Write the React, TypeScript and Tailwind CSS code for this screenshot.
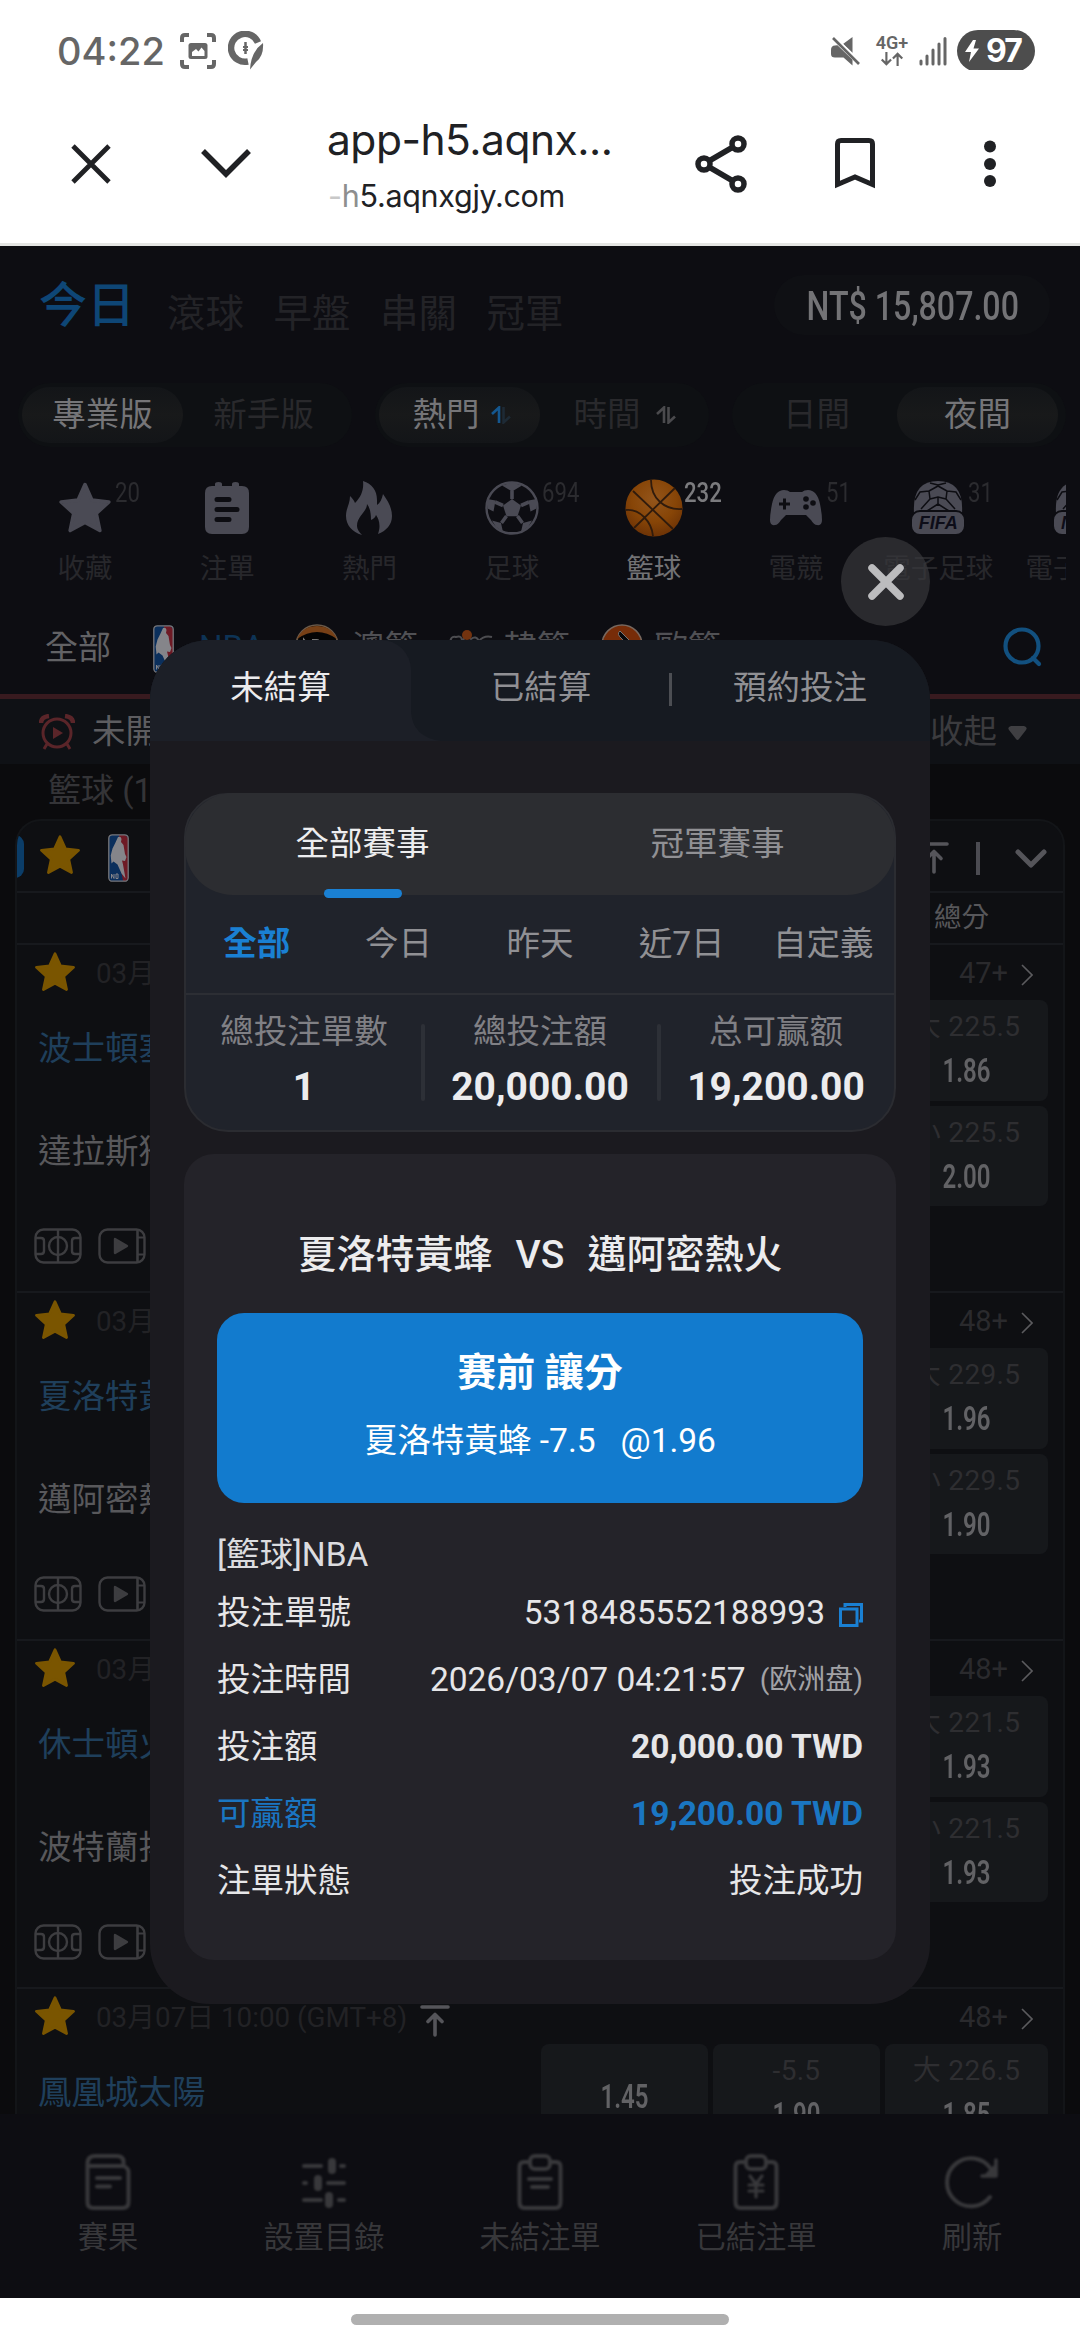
import React from "react";

const FONT = "font-[Roboto,'Noto_Sans_CJK_TC',sans-serif]";

/* ---------- shared drawings ---------- */

function Star({ className }: { className: string }) {
  return (
    <svg viewBox="0 0 24 24" className={className} fill="currentColor" stroke="currentColor" strokeWidth="1.6" strokeLinejoin="round">
      <path d="M12 1.6l3.1 6.9 7.5.8-5.6 5.1 1.6 7.6L12 18.4 5.4 22 7 14.4 1.4 9.3l7.5-.8z" />
    </svg>
  );
}

function NbaLogo({ className }: { className: string }) {
  return (
    <svg viewBox="0 0 21 48" preserveAspectRatio="none" className={className}>
      <rect x="0.8" y="0.8" width="19.4" height="46.4" rx="3.5" fill="#0b2f5c" />
      <path d="M11 1h6q3.200 3 3.200 3.400V43.700q0 3-3.200 3.400h-2L12 30z" fill="#6e1a25" />
      <path d="M10 3q3-1 3.500 2l-.5 3 2.500 3 1.500 9 1.500 3-1.500 4-3-.5 1 4 2.500 14-4-5-4-9-4-3-2 2-.8-8 1.800-7 3-6z" fill="#85858a" />
      <path d="M3.500 40v4.500M3.500 40l2.500 4.500V40M8 40v4.500h2V40z" stroke="#85858a" strokeWidth="1" fill="none" />
      <rect x="0.8" y="0.8" width="19.400" height="46.400" rx="3.500" fill="none" stroke="#77777b" strokeWidth="1.300" />
    </svg>
  );
}

function ToTop({ className }: { className: string }) {
  return (
    <svg viewBox="0 0 30 32" className={className} fill="none" stroke="currentColor" strokeWidth="3.6" strokeLinecap="round" strokeLinejoin="round">
      <path d="M2 2h26M15 30V10M8 16.500l7-7 7 7" />
    </svg>
  );
}

function SortArrows({ up, down }: { up: string; down: string }) {
  return (
    <svg viewBox="0 0 20 18" className="h-[18px] w-5" fill="none" strokeWidth="2.600">
      <path d="M1 8l7-6.500V17" className={up} />
      <path d="M12.500 1v15.500l6.500-6" className={down} />
    </svg>
  );
}

/* ---------- browser chrome ---------- */

function StatusBar() {
  return (
    <div className="flex h-[70px] items-start bg-white pl-[57px] pr-[45px] pt-[31px] text-[#666]">
      <span className="w-[123px] font-[Inter,sans-serif] text-[38px] font-[450] leading-[40px]">04:22</span>
      <svg viewBox="0 0 36 36" className="mt-[2px] h-9 w-9" fill="none" stroke="currentColor" strokeWidth="4">
        <path d="M2 9V5q0-3 3-3h4M27 2h4q3 0 3 3v4M34 27v4q0 3-3 3h-4M9 34H5q-3 0-3-3v-4" />
        <rect x="8.500" y="10" width="19" height="16" rx="2.500" fill="currentColor" stroke="none" />
        <path d="M12 23v-4l4-3 2.500 2.500 3-4L24.500 18v5z" fill="white" stroke="none" />
      </svg>
      <svg viewBox="0 0 36 40" className="ml-[12px] h-10 w-9" fill="none" stroke="currentColor">
        <path d="M20 30.500A14 14 0 1 1 30 11.500" strokeWidth="6.500" />
        <path d="M35 12q1 13-7 19l-6 7.500q1-18 13-26.500z" fill="currentColor" stroke="none" />
        <path d="M17.500 11v12" strokeWidth="2.500" />
        <path d="M15 16h5M15 19h5" strokeWidth="1.800" />
      </svg>
      <div className="flex-1" />
      <svg viewBox="0 0 30 30" className="mt-[5px] h-[30px] w-[30px]" fill="currentColor">
        <path d="M21.500 1v16L12 8zM8 9L21.500 22.500v7l-9-8H4q-4 0-4-3.500v-4Q0 9.500 4 9.500z" />
        <path d="M2 1.500l27 26" stroke="white" strokeWidth="5" />
        <path d="M2 2l26 26" stroke="currentColor" strokeWidth="2.600" />
      </svg>
      <div className="ml-[13px] flex w-[36px] flex-col items-center pt-[4px]">
        <span className="font-[Roboto,sans-serif] text-[18px] font-semibold leading-[16px]">4G+</span>
        <svg viewBox="0 0 24 15" className="mt-[1px] h-[14px] w-6" fill="none" stroke="currentColor" strokeWidth="2.300">
          <path d="M6 0v13M1 8l5 5 5-5M18 15V2M13 7l5-5 5 5" />
        </svg>
      </div>
      <svg viewBox="0 0 28 30" className="ml-[9px] mt-[5px] h-[30px] w-7" stroke="currentColor" strokeWidth="3" strokeLinecap="round">
        <path d="M2 28v-3M8 28v-8M14 28V14M20 28V8M26 28V2.500" />
      </svg>
      <div className="ml-[10px] mt-[-1px] flex h-[42px] w-[78px] items-center rounded-full bg-[#4d4d4d] pl-[7px] text-white">
        <svg viewBox="0 0 16 22" className="h-[22px] w-4" fill="white">
          <path d="M9 0L1 12h6l-2 10L15 8.500H9.500L12 0z" />
        </svg>
        <span className="ml-[6px] font-[Inter,sans-serif] text-[32px] font-bold leading-[42px] tracking-[-2px]">97</span>
      </div>
    </div>
  );
}

function BrowserBar() {
  return (
    <div className="flex h-[176px] border-b-[3px] border-[#e4e5e3] bg-white text-[#202124]">
      <svg viewBox="0 0 40 40" className="ml-[71px] mt-[74px] h-10 w-10" stroke="currentColor" strokeWidth="4.800">
        <path d="M2 2l36 36M38 2L2 38" />
      </svg>
      <svg viewBox="0 0 50 30" className="ml-[90px] mt-[79px] h-[30px] w-[50px]" fill="none" stroke="currentColor" strokeWidth="5.500">
        <path d="M2 2l23 23L48 2" />
      </svg>
      <div className="ml-[76px] mt-[41px] w-[300px] font-[Inter,sans-serif]">
        <div className="text-[42.500px] leading-[58px] tracking-[-0.500px]">app-h5.aqnx...</div>
        <div className="ml-[1px] mt-[7px] text-[30.500px] leading-[40px] tracking-[-0.300px]">
          <span className="text-[#c8c8c8]">-</span>
          <span className="text-[#8e8e8e]">h</span>5.aqnxgjy.com
        </div>
      </div>
      <svg viewBox="0 0 52 58" className="ml-[68px] mt-[65px] h-[58px] w-[52px]" fill="none" stroke="currentColor" strokeWidth="5.500">
        <circle cx="9" cy="29" r="6" />
        <circle cx="43" cy="9" r="6" />
        <circle cx="43" cy="49" r="6" />
        <path d="M14 26l24-14M14 32l24 14" />
      </svg>
      <svg viewBox="0 0 40 52" className="ml-[88px] mt-[68px] h-[52px] w-10" fill="none" stroke="currentColor" strokeWidth="5">
        <path d="M2.500 46.500V6q0-3.500 3.500-3.500h28q3.500 0 3.500 3.500v40.500L20 39z" />
      </svg>
      <svg viewBox="0 0 12 48" className="ml-[109px] mt-[70px] h-12 w-3" fill="currentColor">
        <circle cx="6" cy="6.500" r="6" />
        <circle cx="6" cy="24" r="6" />
        <circle cx="6" cy="41" r="6" />
      </svg>
    </div>
  );
}

/* ---------- page behind the dialog ---------- */

function TopTabs() {
  return (
    <div className="flex h-[137px] shrink-0 items-start pl-[39px] pr-[30px]">
      <div className="mt-[30px] w-24 text-[48px] font-medium leading-[60px] text-[#0e4676]">今日</div>
      <div className="ml-[32px] mt-[38px] flex gap-[29.500px] whitespace-nowrap text-[38.500px] leading-[60px] text-[#232327]">
        <span>滾球</span>
        <span>早盤</span>
        <span>串關</span>
        <span>冠軍</span>
      </div>
      <div className="flex-1" />
      <div className="mt-[29px] flex h-[60px] w-[276px] shrink-0 justify-center rounded-full bg-[#0f1014]">
        <span className="w-[272px] shrink-0 scale-x-[0.775] whitespace-nowrap text-center text-[41.500px] font-medium leading-[62px] text-[#737376]">NT$ 15,807.00</span>
      </div>
    </div>
  );
}

const activePill = "bg-linear-to-b from-[#131518] via-[#18191a] to-[#131518] text-[#757578]";

function Segments() {
  const base = "flex h-[56px] w-[161px] items-center justify-center rounded-full";
  return (
    <div className="flex h-[64px] shrink-0 gap-[23px] pl-[18px] text-[33.500px] leading-[56px]">
      <div className="flex w-[334px] rounded-full bg-[#0e1013] p-1 text-[#29292c]">
        <div className={`${base} ${activePill}`}>專業版</div>
        <div className={base}>新手版</div>
      </div>
      <div className="flex w-[334px] rounded-full bg-[#0e1013] p-1 text-[#29292c]">
        <div className={`${base} ${activePill}`}>
          <span className="ml-[4px] mr-[11px]">熱門</span>
          <SortArrows up="stroke-[#14578f]" down="stroke-[#1d2a35]" />
        </div>
        <div className={base}>
          <span className="ml-[8px] mr-[15px]">時間</span>
          <SortArrows up="stroke-[#4a4a4d]" down="stroke-[#4a4a4d]" />
        </div>
      </div>
      <div className="flex w-[334px] rounded-full bg-[#0e1013] p-1 text-[#29292c]">
        <div className={base}>日間</div>
        <div className={`${base} ${activePill}`}>夜間</div>
      </div>
    </div>
  );
}

const slips = (
  <svg viewBox="0 0 44 52" className="h-[52px] w-11">
    <path d="M10 2q0-2 3.500-2t3.500 2v2h10V2q0-2 3.500-2T34 2v2h3q7 0 7 7v34q0 7-7 7H7q-7 0-7-7V11q0-7 7-7h3z" fill="#4a4a54" />
    <path d="M12 17.500h12M12 27.500h20M12 37.500h12" stroke="#0d0d12" strokeWidth="5" strokeLinecap="round" />
  </svg>
);

const flame = (
  <svg viewBox="0 0 46 54" className="h-[54px] w-[46px]" fill="#4a4a54">
    <path d="M17 0c9 3 14 9 14 19v5c3-2 5-6 6-11 5 7 9 14 9 22 0 9-6 15-14 18 3-8 1-15-2-19-1 3-3 4-5 5 0-7-1-12-4-16 0 8-10 12-10 22 0 3 2 6 5 9C6 51 0 44 0 35c0-8 4-12 4-20 2 2 4 4 5 7 6-6 9-13 8-22z" />
  </svg>
);

const soccer = (
  <svg viewBox="0 0 54 54" className="h-[54px] w-[54px]">
    <circle cx="27" cy="27" r="25.500" fill="#0d0d12" stroke="#4a4a54" strokeWidth="2.400" />
    <path d="M27 18l9 6.600-3.500 10.700h-11L18 24.600z" fill="#4a4a54" />
    <path d="M27 18V9.500M36 24.500l8-3.500M32.500 35l5 7M21.500 35l-5 7M18 24.500L10 21" stroke="#4a4a54" strokeWidth="3.600" />
    <path d="M17 4.500l10 6 10-6-10-3zM51.500 18l-8 1.500 2 11 6-3zM2.500 27.500l6 3 2-11-8-1.500zM36 51l2-9 9-2.500-3.500 6zM18 51l-2-9-9-2.500 3.500 6zM20 51h14l-7 2z" fill="#4a4a54" />
  </svg>
);

const basketball = (
  <svg viewBox="0 0 58 58" className="h-[58px] w-[58px]">
    <defs>
      <radialGradient id="ball" cx="0.500" cy="0.350" r="0.650">
        <stop offset="0" stopColor="#93551b" />
        <stop offset="0.600" stopColor="#874507" />
        <stop offset="1" stopColor="#6d3306" />
      </radialGradient>
    </defs>
    <circle cx="29" cy="29" r="28.500" fill="url(#ball)" />
    <path d="M8 12l40 38M50 9L9 49M26 1q0 14 9 22t22 7M1 31q10-1 18 7t9 19" fill="none" stroke="#301b0c" strokeWidth="1.800" />
  </svg>
);

const gamepad = (
  <svg viewBox="0 0 52 36" className="h-9 w-[52px]">
    <path d="M14 0q4 0 6 2h12q2-2 6-2 9 0 12 14 2 10 2 16 0 6-5 5-3 0-6-5l-5-5H16l-5 5q-3 5-6 5-5 1-5-5 0-6 2-16Q5 0 14 0z" fill="#4a4a54" />
    <path d="M9 14h11M14.500 8.500v11" stroke="#0d0d12" strokeWidth="3" />
    <g fill="#0d0d12">
      <circle cx="36" cy="9" r="2.800" />
      <circle cx="36" cy="17" r="2.800" />
      <circle cx="43" cy="13" r="2.800" />
    </g>
  </svg>
);

function BadgeBall({ text }: { text: string }) {
  return (
    <div className="flex w-14 flex-col items-center">
      <svg viewBox="0 0 50 32" className="h-8 w-[50px]">
        <path d="M1 32Q-1 0 25 0t24 32z" fill="#4a4a54" />
        <path d="M25 4l-8-2M25 4l8-2M25 4v2M25 5l-9 5M25 5l9 5M16 10l-9 1-5 8M34 10l9 1 5 8M16 10l1 8-9 10M34 10l-1 8 9 10M17 18l8-2 8 2M25 16v8M14 30l11-7 11 7" fill="none" stroke="#0d0d12" strokeWidth="1.500" />
      </svg>
      <div className="mt-[-3px] flex h-[26px] w-[56px] items-center justify-center rounded-[10px] border-2 border-[#0d0d12] bg-[#4a4a54] font-['Liberation_Sans',sans-serif] text-[18px] font-bold italic leading-[22px] text-[#0d0d18]">
        {text}
      </div>
    </div>
  );
}

const sports = [
  { label: "收藏", count: "20", icon: <Star className="h-[54px] w-[54px] text-[#4a4a54]" /> },
  { label: "注單", count: "", icon: slips },
  { label: "熱門", count: "", icon: flame },
  { label: "足球", count: "694", icon: soccer },
  { label: "籃球", count: "232", icon: basketball, active: true },
  { label: "電競", count: "51", icon: gamepad },
  { label: "電子足球", count: "31", icon: <BadgeBall text="FIFA" /> },
  { label: "電子籃球", count: "", icon: <BadgeBall text="NBA" /> },
];

function Sports() {
  return (
    <div className="ml-[14px] mr-[14px] flex h-[161px] shrink-0 overflow-hidden">
      {sports.map((s) => (
        <div key={s.label} className="relative flex w-[142.200px] shrink-0 flex-col items-center pt-[32px]">
          <div className="flex h-[58px] items-center">{s.icon}</div>
          <span className={`mt-[12px] whitespace-nowrap text-[27.500px] leading-[40px] ${s.active ? "text-[#727275]" : "text-[#27272b]"}`}>{s.label}</span>
          {s.count && (
            <span className={`absolute left-[101px] top-[32px] origin-left scale-x-[0.820] text-[27px] leading-[28px] ${s.active ? "font-medium text-[#7b7b7e]" : "text-[#2b2b2f]"}`}>{s.count}</span>
          )}
        </div>
      ))}
    </div>
  );
}

function Leagues() {
  return (
    <div className="flex h-[86px] shrink-0 items-start pl-[45px] pr-[37px] pt-[16px] text-[33px] leading-[48px] text-[#505054]">
      <span className="text-[#626265]">全部</span>
      <NbaLogo className="ml-[42px] mt-[1px] h-12 w-[21px]" />
      <span className="ml-[25px] text-[#0d3355]">NBA</span>
      <svg viewBox="0 0 44 44" className="ml-[30px] h-11 w-11">
        <circle cx="22" cy="22" r="21" fill="#050505" stroke="#6b5a4a" strokeWidth="1.500" />
        <path d="M2 15Q8 2 22 2t20 13Q22 1 2 15z" fill="#774016" />
        <path d="M9 22v-6l5 6v-6M18 16v6h4q3-3 0-3 3-3 0-3zM28 16v6h6" fill="none" stroke="#777" strokeWidth="2" />
      </svg>
      <span className="ml-[13px]">澳籃</span>
      <svg viewBox="0 0 46 44" className="ml-[30px] mt-[3px] h-11 w-[46px]">
        <path d="M2 18q0-10 6-8 6-2 6 4 4-6 9-2 5-4 8 2 5-6 13-4" fill="none" stroke="#4c4c50" strokeWidth="2" />
        <circle cx="19" cy="8" r="5" fill="#73330f" />
      </svg>
      <span className="ml-[10px]">韓籃</span>
      <svg viewBox="0 0 46 46" className="ml-[28px] mt-[-1px] h-[46px] w-[46px]">
        <circle cx="24" cy="22" r="20" fill="#772c08" stroke="#77685f" strokeWidth="1.500" />
        <path d="M22 8q-4 3 2 8l8 10q6-2 2-6z" fill="#08080a" stroke="#777" />
      </svg>
      <span className="ml-[11px]">歐籃</span>
      <div className="flex-1" />
      <svg viewBox="0 0 40 40" className="mt-[3px] h-10 w-10" fill="none" stroke="#12507f" strokeWidth="4.200" strokeLinecap="round">
        <circle cx="19" cy="19" r="16.500" />
        <path d="M30 31l6 6" />
      </svg>
    </div>
  );
}

function Unstarted() {
  return (
    <>
      <div className="flex h-[70px] shrink-0 items-center border-t-[5px] border-[#381a1f] bg-[#0f1115] pl-[39px] pr-[53px] text-[33.500px] leading-[65px]">
        <svg viewBox="0 0 36 36" className="h-9 w-9" fill="none" stroke="#5a2529" strokeWidth="3">
          <circle cx="18" cy="19" r="14" />
          <path d="M2 9q0-6 8-7M34 9q0-6-8-7" strokeWidth="4.500" />
          <path d="M8 30l-3 5M28 30l3 5" />
          <path d="M14 13l10 6-10 6z" fill="#5a2529" stroke="none" />
        </svg>
        <span className="ml-[17px] text-[#5d5d60]">未開賽</span>
        <div className="flex-1" />
        <span className="text-[#3b3b3e]">收起</span>
        <svg viewBox="0 0 19 15" className="ml-[11px] mt-[3px] h-[15px] w-[19px]" fill="#3f3f42">
          <path d="M3 0h13q4 1 2 4l-7 9q-1.500 2-3 0L1 4Q-1 1 3 0z" />
        </svg>
      </div>
      <div className="h-[55px] shrink-0 pl-[48px] text-[33px] leading-[53px] text-[#343437]">籃球 (13)</div>
    </>
  );
}

type Cell = { line?: string; odds?: string };
type MatchData = { time: string; more: string; home: string; away: string; cells: Cell[]; pin?: boolean };

const blank: Cell = {};
const matches: MatchData[] = [
  { time: "03月07日", more: "47+", home: "波士頓塞爾提克", away: "達拉斯獨行俠", cells: [blank, blank, { line: "大 225.5", odds: "1.86" }, blank, blank, { line: "小 225.5", odds: "2.00" }] },
  { time: "03月07日", more: "48+", home: "夏洛特黃蜂", away: "邁阿密熱火", cells: [blank, blank, { line: "大 229.5", odds: "1.96" }, blank, blank, { line: "小 229.5", odds: "1.90" }] },
  { time: "03月07日", more: "48+", home: "休士頓火箭", away: "波特蘭拓荒者", cells: [blank, blank, { line: "大 221.5", odds: "1.93" }, blank, blank, { line: "小 221.5", odds: "1.93" }] },
  { time: "03月07日 10:00 (GMT+8)", more: "48+", home: "鳳凰城太陽", away: "", cells: [{ odds: "1.45" }, { line: "-5.5", odds: "1.90" }, { line: "大 226.5", odds: "1.85" }], pin: true },
];

function Match({ m }: { m: MatchData }) {
  return (
    <div className="h-[348px] shrink-0 border-t-2 border-[#17191d]">
      <div className="flex h-[55px] items-center pl-[17px] pr-[30px]">
        <Star className="mb-[2px] h-[42px] w-[42px] text-[#7a5500]" />
        <span className="ml-[20px] mt-[2px] text-[27.800px] leading-[40px] text-[#222225]">{m.time}</span>
        {m.pin && <ToTop className="ml-[13px] mt-[8px] h-8 w-[30px] text-[#55555a]" />}
        <div className="flex-1" />
        <span className="text-[29px] leading-[40px] text-[#2a2a2d]">{m.more}</span>
        <svg viewBox="0 0 12 22" className="ml-[13px] mt-[5px] h-[22px] w-3" fill="none" stroke="#5b5b5e" strokeWidth="1.600">
          <path d="M1 1l10 10L1 21" />
        </svg>
      </div>
      <div className="flex pl-[21px] pr-[15px]">
        <div className="flex-1 text-[33.500px] leading-[48px]">
          <div className="mt-[25px] text-[#1f3f5b]">{m.home}</div>
          <div className="mt-[55px] h-12 text-[#58585b]">{m.away}</div>
          <div className="-ml-[4px] mt-[52px] flex gap-[16px]">
            <svg viewBox="0 0 48 36" className="h-9 w-12" fill="none" stroke="#3d3d40" strokeWidth="2.400">
              <rect x="1.500" y="1.500" width="45" height="33" rx="8" />
              <path d="M24 2v32M2 10h5q3 0 3 3v10q0 3-3 3H2M46 10h-5q-3 0-3 3v10q0 3 3 3h5" />
              <circle cx="24" cy="18" r="9" />
            </svg>
            <svg viewBox="0 0 48 36" className="h-9 w-12" fill="none" stroke="#3d3d40" strokeWidth="2.400">
              <rect x="1.500" y="1.500" width="45" height="33" rx="8" />
              <path d="M39.500 2v32" strokeWidth="2.600" />
              <path d="M39 9.500h7M39 26.500h7" strokeWidth="2" />
              <path d="M17 11l12 7-12 7z" fill="#3d3d40" strokeLinejoin="round" />
            </svg>
          </div>
        </div>
        <div className="grid grid-cols-[167px_167px_163px] content-start gap-x-[5px] gap-y-[5px]">
          {m.cells.map((c, i) => (
            <div key={i} className="flex h-[100.500px] flex-col items-center justify-center rounded-[8px] bg-[#16181b]">
              {c.line && <span className="h-[46px] text-[28px] leading-[46px] tracking-[0.300px] text-[#2e2e31]">{c.line}</span>}
              {c.odds && <span className={`scale-x-[0.740] text-[32.500px] font-semibold text-[#626265] ${c.line ? "h-[46px] leading-[43px]" : "pt-[6px]"}`}>{c.odds}</span>}
            </div>
          ))}
        </div>
      </div>
    </div>
  );
}

function League() {
  return (
    <div className="mx-[15px] flex h-[1295px] shrink-0 flex-col overflow-hidden rounded-t-[26px] border-x-2 border-t-2 border-[#131518] bg-[#0e0f12]">
      <div className="-mx-[2px] flex h-[72px] shrink-0 items-center border-b-2 border-[#17191d] pr-[18px]">
        <div className="h-[43px] w-[9px] rounded-r-[9px] bg-[#0b3d68]" />
        <Star className="mb-[3px] ml-[15px] h-[42px] w-[42px] text-[#7a5500]" />
        <NbaLogo className="ml-[27px] mt-[4px] h-12 w-[21px]" />
        <div className="flex-1" />
        <ToTop className="mt-[4px] h-8 w-[30px] text-[#55555a]" />
        <div className="ml-[27px] mt-[5px] h-[33px] w-[4px] bg-[#4c4c52]" />
        <svg viewBox="0 0 32 20" className="ml-[35px] mt-[6px] h-5 w-8" fill="none" stroke="#55555a" strokeWidth="5" strokeLinecap="round" strokeLinejoin="round">
          <path d="M3 3l13 13L29 3" />
        </svg>
      </div>
      <div className="h-[50px] shrink-0 pr-[74px] text-right text-[27.500px] leading-[49px] text-[#57575a]">總分</div>
      {matches.map((m) => (
        <Match key={m.home} m={m} />
      ))}
    </div>
  );
}

function BottomNav() {
  const p = { fill: "none", stroke: "#38383b", strokeWidth: 4, strokeLinecap: "round" as const, strokeLinejoin: "round" as const };
  const items = [
    {
      label: "賽果",
      icon: (
        <svg viewBox="0 0 46 58" className="h-[58px] w-[46px]" {...p}>
          <path d="M2.500 11q0-8 7-8h22q7 0 7 6v4h-36zM2.500 12v37q0 6 6 6h29q6 0 6-6V19q0-4-5-6M12 25h23M12 33.500h13" />
        </svg>
      ),
    },
    {
      label: "設置目錄",
      icon: (
        <svg viewBox="0 0 46 52" className="h-[52px] w-[46px]" {...p}>
          <path d="M3 10h17M40 10h3M3 27h2M27 27h16M3 44h17M38 44h5" />
          <path d="M31 6v8M17 23v8M28 40v8" strokeWidth="8" />
        </svg>
      ),
    },
    {
      label: "未結注單",
      icon: (
        <svg viewBox="0 0 46 58" className="h-[58px] w-[46px]" {...p}>
          <path d="M13 9H7q-4.500 0-4.500 5v35q0 6 5 6h31q5 0 5-6V14q0-5-4.500-5h-6M12 26h22M15 34h16" />
          <rect x="13" y="3" width="20" height="13" rx="5" />
        </svg>
      ),
    },
    {
      label: "已結注單",
      icon: (
        <svg viewBox="0 0 46 58" className="h-[58px] w-[46px]" {...p}>
          <path d="M13 9H7q-4.500 0-4.500 5v35q0 6 5 6h31q5 0 5-6V14q0-5-4.500-5h-6" />
          <rect x="13" y="3" width="20" height="13" rx="5" />
          <path d="M17 23l6 8 6-8M23 31v13M16 32h14M16 38h14" strokeWidth="3.200" />
        </svg>
      ),
    },
    {
      label: "刷新",
      icon: (
        <svg viewBox="0 0 54 54" className="h-[54px] w-[54px]" {...p}>
          <path d="M45 42A24 24 0 1 1 46 14l3 6" />
          <path d="M51 5v16H37" strokeWidth="3.600" />
          <path d="M50 12v8h-8z" fill="#38383b" />
        </svg>
      ),
    },
  ];
  return (
    <div className="flex h-[184px] shrink-0 bg-[#0d0d12]">
      {items.map((it) => (
        <div key={it.label} className="flex w-[216px] flex-col items-center pt-[39px]">
          <div className="flex h-[58px] items-center blur-[0.800px]">{it.icon}</div>
          <span className="mt-[7px] text-[30.300px] leading-[40px] text-[#37373a]">{it.label}</span>
        </div>
      ))}
    </div>
  );
}

/* ---------- bet record dialog ---------- */

function Summary() {
  const stats = [
    ["總投注單數", "1"],
    ["總投注額", "20,000.00"],
    ["总可赢额", "19,200.00"],
  ];
  return (
    <div className="h-[339px] rounded-[44px] border-2 border-[#2b2c31] bg-[#20232b]">
      <div className="-mx-[1px] -mt-[2px] flex h-[102px] rounded-[48px] bg-[#2c2d31] text-[33.500px] leading-[102px]">
        <div className="relative flex flex-1 justify-center text-[#ededef]">
          全部賽事
          <div className="absolute bottom-[-3px] left-[139px] h-[9px] w-[78px] rounded-full bg-[#1a80d3]" />
        </div>
        <div className="flex-1 text-center text-[#909094]">冠軍賽事</div>
      </div>
      <div className="flex h-[100px] border-b-2 border-[#2c2e34] text-center text-[33.500px] leading-[98px] text-[#909094]">
        <span className="flex-1 font-bold text-[#1a80d3]">全部</span>
        <span className="flex-1">今日</span>
        <span className="flex-1">昨天</span>
        <span className="flex-1">近7日</span>
        <span className="flex-1">自定義</span>
      </div>
      <div className="grid grid-cols-3 divide-x-0 pt-[13px]">
        {stats.map(([label, value], i) => (
          <div key={label} className="relative text-center">
            <div className="text-[33.500px] leading-[48px] text-[#808085]">{label}</div>
            <div className="text-[39px] font-bold leading-[62px] text-[#ececee]">{value}</div>
            {i < 2 && <div className="absolute right-[-3px] top-[16px] h-[77px] w-[4px] rounded-full bg-[#2d3037]" />}
          </div>
        ))}
      </div>
    </div>
  );
}

function Row({ label, tone = "text-[#e6e6e8]", children }: { label: string; tone?: string; children: React.ReactNode }) {
  return (
    <div className={`flex h-[66.800px] items-center justify-between leading-[66px] ${tone}`}>
      <span>{label}</span>
      <span className="flex items-center">{children}</span>
    </div>
  );
}

function Ticket() {
  return (
    <div className="mt-[22px] h-[806px] rounded-[30px] bg-[#242329] px-[33px] pt-[71px] text-[33.500px]">
      <div className="flex justify-center gap-[23px] text-[39px] font-medium leading-[60px] text-[#ececee]">
        <span>夏洛特黃蜂</span>
        <span>VS</span>
        <span>邁阿密熱火</span>
      </div>
      <div className="mt-[28px] h-[190px] rounded-[27px] bg-[#127bce] pt-[29px] text-center text-white">
        <div className="text-[39px] font-bold leading-[62px]">赛前 讓分</div>
        <div className="mt-[6px] whitespace-pre leading-[62px]">夏洛特黃蜂 -7.5{"   "}@1.96</div>
      </div>
      <div className="mt-[27px] h-[50px] leading-[50px] text-[#dcdcdf]">[籃球]NBA</div>
      <Row label="投注單號">
        5318485552188993
        <svg viewBox="0 0 24 24" className="ml-[14px] mt-[4px] h-6 w-6" fill="none" stroke="#1a80d3" strokeWidth="3">
          <rect x="1.500" y="6" width="16.500" height="16.500" />
          <path d="M6 4V1.500h16.500V18H20" />
        </svg>
      </Row>
      <Row label="投注時間">
        2026/03/07 04:21:57<span className="ml-[14px] text-[28px] text-[#a2a2a6]">(欧洲盘)</span>
      </Row>
      <Row label="投注額">
        <b>20,000.00 TWD</b>
      </Row>
      <Row label="可贏額" tone="text-[#1a76c2]">
        <b>19,200.00 TWD</b>
      </Row>
      <Row label="注單狀態">投注成功</Row>
    </div>
  );
}

function Dialog() {
  return (
    <div className="absolute left-[150px] top-[640px] h-[1364px] w-[780px] overflow-hidden rounded-[60px] bg-[#1b1a1f]">
      <div className="flex h-[101px] bg-[#161a21] text-center text-[33.500px] leading-[96px] text-[#909094]">
        <div className="relative w-[261px] rounded-tr-[30px] bg-[#1c1f27] text-[#ececee]">
          未結算
          <svg viewBox="0 0 30 30" className="absolute bottom-0 left-[261px] h-[30px] w-[30px]" fill="#1c1f27">
            <path d="M0 0q1 26 30 30H0z" />
          </svg>
        </div>
        <div className="w-[260px]">已結算</div>
        <div className="-mx-[2px] mt-[33px] h-[33px] w-[3px] bg-[#4c4e53]" />
        <div className="w-[260px]">預約投注</div>
      </div>
      <div className="px-[34px] pt-[52px]">
        <Summary />
        <Ticket />
      </div>
    </div>
  );
}

export default function App() {
  return (
    <div className={`relative flex h-[2340px] w-[1080px] flex-col overflow-hidden bg-white ${FONT}`}>
      <StatusBar />
      <BrowserBar />
      <div className="flex h-[2052px] shrink-0 flex-col overflow-hidden bg-[#0d0d12]">
        <TopTabs />
        <Segments />
        <Sports />
        <Leagues />
        <div className="flex h-[1420px] shrink-0 flex-col bg-[#0b0b0d]">
          <Unstarted />
          <League />
        </div>
        <BottomNav />
      </div>
      <div className="flex h-[42px] shrink-0 justify-center bg-white pt-[16px]">
        <div className="h-[11px] w-[378px] rounded-full bg-[#b0b0b0]" />
      </div>
      <Dialog />
      <div className="absolute left-[841px] top-[537px] flex h-[89px] w-[89px] items-center justify-center rounded-full bg-[#3a3a3d]/65">
        <svg viewBox="0 0 36 36" className="h-9 w-9" stroke="#bcbcbe" strokeWidth="7.500" strokeLinecap="round">
          <path d="M4 4l28 28M32 4L4 32" />
        </svg>
      </div>
    </div>
  );
}
